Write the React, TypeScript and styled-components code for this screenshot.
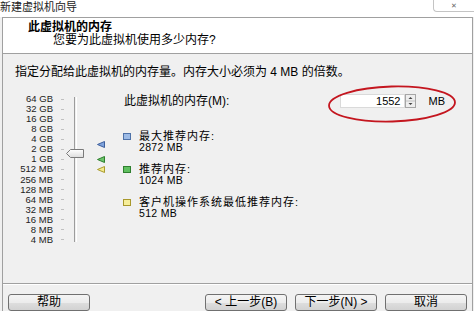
import React from "react";
import styled, { createGlobalStyle } from "styled-components";

const GlobalStyle = createGlobalStyle`
  html, body {
    margin: 0;
    padding: 0;
    background: #f0f0f0;
  }
  body {
    font-family: "Liberation Sans", "Noto Sans CJK SC", sans-serif;
    color: #000;
  }
`;

// scale from 64 GB down to 4 MB, one row per power of two
const scale = ["64 GB", "32 GB", "16 GB", "8 GB", "4 GB", "2 GB", "1 GB", "512 MB", "256 MB", "128 MB", "64 MB", "32 MB", "16 MB", "8 MB", "4 MB"];
const ROW_H = 151 / scale.length;
const posOf = (mb: number) => (Math.log2(65536 / mb) + 0.5) * ROW_H;

const markers = [
  { mb: 2872, fill: "#7fa3dc", stroke: "#3d5f9c" },
  { mb: 1024, fill: "#6cc46c", stroke: "#2d7f2d" },
  { mb: 512, fill: "#f3e98a", stroke: "#a99b2e" },
];

const legend = [
  { label: "最大推荐内存:", value: "2872 MB", fill: "#9dbbe6", stroke: "#4f72a8" },
  { label: "推荐内存:", value: "1024 MB", fill: "#5fbf5f", stroke: "#2f7f2f" },
  { label: "客户机操作系统最低推荐内存:", value: "512 MB", fill: "#f6ee9a", stroke: "#a8982c" },
];

const memory = 1552;

const Window = styled.div`
  width: 474px;
  height: 311px;
  overflow: hidden;
  background: #f0f0f0;
  display: flex;
  flex-direction: column;
`;

const TitleBar = styled.div`
  height: 17px;
  flex: none;
  background: #fff;
  display: flex;
  justify-content: space-between;
  align-items: flex-start;
  font-size: 11px;
  line-height: 14px;
  color: #222;
`;

const CloseTab = styled.div`
  width: 41px;
  height: 12px;
  box-sizing: border-box;
  border-left: 1px solid #c4c4c4;
  border-bottom: 1px solid #c4c4c4;
  border-bottom-left-radius: 4px;
  font-size: 7px;
  line-height: 11px;
  text-align: center;
  color: #666;
`;

const Frame = styled.div`
  flex: 1;
  margin: 0 1px 0 2px;
  border: 1px solid #a0a0a0;
  border-bottom: none;
  display: flex;
  flex-direction: column;
`;

const Header = styled.div`
  height: 33px;
  padding: 2px 0 0 25px;
  background: #fff;
  border-bottom: 1px solid #a0a0a0;
`;

const Title = styled.div`
  font-size: 12px;
  line-height: 14px;
  font-weight: bold;
`;

const Subtitle = styled.div`
  font-size: 12px;
  line-height: 13px;
  margin-left: 25px;
`;

const Body = styled.div`
  height: 229px;
  box-sizing: border-box;
  padding: 11px 0 0 12px;
`;

const Intro = styled.div`
  font-size: 12px;
  line-height: 14px;
`;

const Content = styled.div`
  display: flex;
  margin-top: 15px;
`;

const SliderBox = styled.div`
  position: relative;
  width: 108px;
  height: 151px;
  display: flex;
  flex: none;
`;

const Scale = styled.div`
  width: 38px;
  display: flex;
  flex-direction: column;
`;

const ScaleLabel = styled.div`
  flex: 1;
  display: flex;
  align-items: center;
  justify-content: flex-end;
  font-size: 9.5px;
  line-height: 10px;
  color: #222;
  white-space: nowrap;
`;

const Ticks = styled.div`
  width: 4px;
  margin-left: 8px;
  display: flex;
  flex-direction: column;
`;

const Tick = styled.div`
  flex: 1;
  display: flex;
  align-items: center;
  &::after {
    content: "";
    width: 3px;
    height: 1px;
    background: #c0c0c0;
  }
`;

const Track = styled.div`
  width: 1px;
  height: 145px;
  margin: 3px 0 0 9px;
  border-left: 1px solid #9c9c9c;
  border-right: 1px solid #fff;
`;

const Thumb = styled.svg`
  position: absolute;
  left: 51px;
`;

const Marker = styled.svg`
  position: absolute;
  left: 82px;
`;

const RightCol = styled.div`
  flex: 1;
  padding-right: 27px;
`;

const MemoryRow = styled.div`
  display: flex;
  align-items: center;
  height: 14px;
`;

const MemLabel = styled.div`
  font-size: 12px;
  line-height: 14px;
  padding-left: 1px;
`;

const InputGroup = styled.div`
  position: relative;
  margin-left: auto;
  display: flex;
  align-items: center;
`;

const InputBox = styled.div`
  width: 60px;
  height: 12px;
  padding-right: 3px;
  background: #fff;
  border: 1px solid #dadada;
  font-size: 11px;
  line-height: 12px;
  text-align: right;
`;

const Spinner = styled.svg`
  display: block;
`;

const Unit = styled.span`
  margin-left: 13px;
  font-size: 11px;
`;

const Circle = styled.svg`
  position: absolute;
  left: -14px;
  top: -10px;
  pointer-events: none;
`;

const Legend = styled.div`
  margin-top: 23px;
  display: flex;
  flex-direction: column;
  gap: 12px;
`;

const LegendItem = styled.div`
  display: flex;
  align-items: flex-start;
`;

const Swatch = styled.div<{ $fill: string; $stroke: string }>`
  width: 8px;
  height: 7px;
  box-sizing: border-box;
  margin: 2px 8px 0 0;
  background: ${p => p.$fill};
  border: 1px solid ${p => p.$stroke};
`;

const LegendLabel = styled.div`
  font-size: 11px;
  line-height: 11px;
  letter-spacing: 1px;
`;

const LegendValue = styled.div`
  font-size: 10.5px;
  line-height: 10px;
  letter-spacing: 0.3px;
`;

const Footer = styled.div`
  flex: 1;
  border-top: 1px solid #a0a0a0;
  box-shadow: inset 0 1px 0 #fff;
  padding: 10px 5px 0 5px;
  display: flex;
  align-items: flex-start;
  gap: 8px;
`;

const Button = styled.button<{ $push?: boolean }>`
  width: 82px;
  height: 17px;
  padding: 0;
  margin-right: ${p => (p.$push ? "auto" : "0")};
  border: 1px solid #707070;
  border-radius: 3px;
  background: linear-gradient(#f4f4f4, #ececec 50%, #dedede 51%, #d2d2d2);
  font-family: "Liberation Sans", "Noto Sans CJK SC", sans-serif;
  font-size: 12px;
  line-height: 15px;
  color: #000;
`;

const App = () => {
  return (
    <>
      <GlobalStyle />
      <Window>
        <TitleBar>
          <span>新建虚拟机向导</span>
          <CloseTab>✕</CloseTab>
        </TitleBar>
        <Frame>
          <Header>
            <Title>此虚拟机的内存</Title>
            <Subtitle>您要为此虚拟机使用多少内存?</Subtitle>
          </Header>
          <Body>
            <Intro>指定分配给此虚拟机的内存量。内存大小必须为 4 MB 的倍数。</Intro>
            <Content>
              <SliderBox>
                <Scale>
                  {scale.map(s => (
                    <ScaleLabel key={s}>{s}</ScaleLabel>
                  ))}
                </Scale>
                <Ticks>
                  {scale.map(s => (
                    <Tick key={s} />
                  ))}
                </Ticks>
                <Track />
                <Thumb width="18" height="9" viewBox="0 0 18 9" style={{ top: posOf(memory) - 4.5 }}>
                  <defs>
                    <linearGradient id="thumbg" x1="0" y1="0" x2="0" y2="1">
                      <stop offset="0" stopColor="#ffffff" />
                      <stop offset="1" stopColor="#dcdcdc" />
                    </linearGradient>
                  </defs>
                  <path d="M0.5 4.5 L4.5 0.5 H17.5 V8.5 H4.5 Z" fill="url(#thumbg)" stroke="#7a7a7a" />
                </Thumb>
                {markers.map(m => (
                  <Marker key={m.mb} width="8" height="7" viewBox="0 0 8 7" style={{ top: posOf(m.mb) - 3.5 }}>
                    <path d="M0.5 3.5 L7.5 0.5 V6.5 Z" fill={m.fill} stroke={m.stroke} />
                  </Marker>
                ))}
              </SliderBox>
              <RightCol>
                <MemoryRow>
                  <MemLabel>此虚拟机的内存(M):</MemLabel>
                  <InputGroup>
                    <InputBox>{memory}</InputBox>
                    <Spinner width="11" height="14" viewBox="0 0 11 14">
                      <rect x="0.5" y="0.5" width="10" height="13" fill="#eeeeee" stroke="#a6a6a6" />
                      <line x1="1" y1="7" x2="10" y2="7" stroke="#c2c2c2" />
                      <path d="M3.5 5 L5.5 3 L7.5 5 Z" fill="#444" />
                      <path d="M3.5 9 L5.5 11 L7.5 9 Z" fill="#444" />
                    </Spinner>
                    <Unit>MB</Unit>
                    <Circle width="132" height="40" viewBox="0 0 132 40">
                      <ellipse cx="66" cy="20" rx="63" ry="17.5" fill="none" stroke="#c4161f" strokeWidth="1.8" transform="rotate(-1.5 66 20)" />
                    </Circle>
                  </InputGroup>
                </MemoryRow>
                <Legend>
                  {legend.map(l => (
                    <LegendItem key={l.label}>
                      <Swatch $fill={l.fill} $stroke={l.stroke} />
                      <div>
                        <LegendLabel>{l.label}</LegendLabel>
                        <LegendValue>{l.value}</LegendValue>
                      </div>
                    </LegendItem>
                  ))}
                </Legend>
              </RightCol>
            </Content>
          </Body>
          <Footer>
            <Button $push>帮助</Button>
            <Button>&lt; 上一步(B)</Button>
            <Button>下一步(N) &gt;</Button>
            <Button>取消</Button>
          </Footer>
        </Frame>
      </Window>
    </>
  );
};

export default App;
